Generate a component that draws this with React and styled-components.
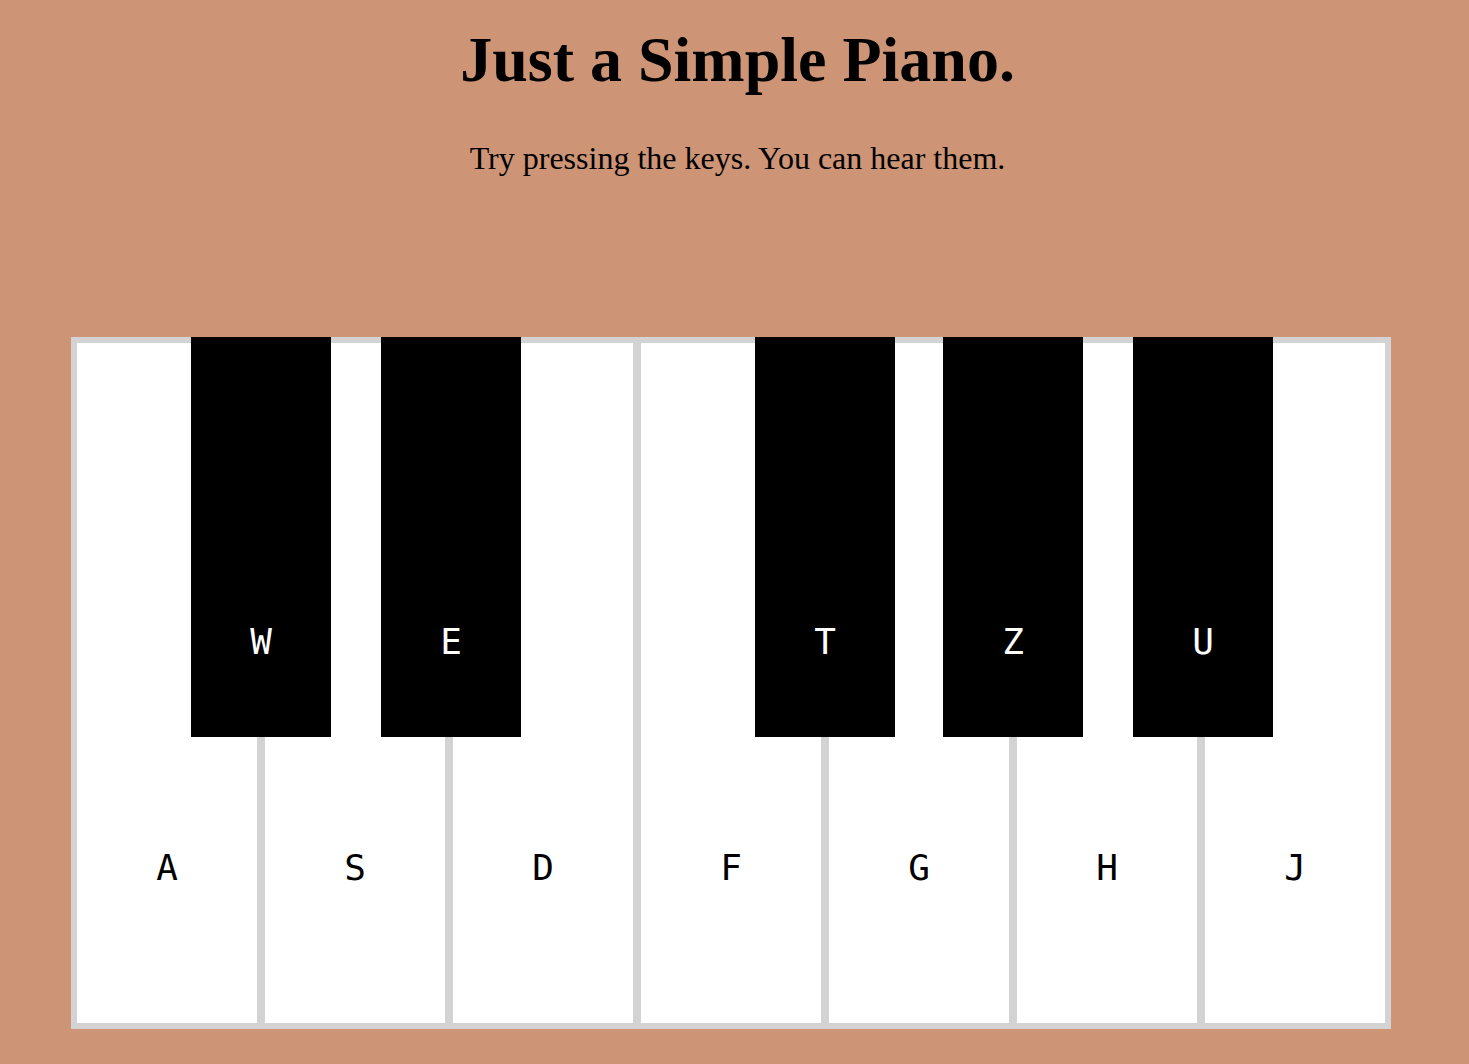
import React from "react";
import styled, { createGlobalStyle } from "styled-components";

const GlobalStyle = createGlobalStyle`
  html, body {
    margin: 0;
    padding: 0;
    background: #ce9476;
  }
  body {
    font-family: "Liberation Serif", "Times New Roman", serif;
    color: #000;
  }
`;

const Page = styled.main`
  display: flex;
  flex-direction: column;
  align-items: stretch;
  min-height: 1064px;
`;

const Title = styled.h1`
  margin: 23px 0 0 0;
  font-family: "Liberation Serif", "Times New Roman", serif;
  font-weight: bold;
  font-size: 64px;
  line-height: normal;
  text-align: center;
  padding-left: 6px;
`;

const Subtitle = styled.p`
  margin: 43px 0 0 0;
  font-size: 32px;
  line-height: normal;
  text-align: center;
  padding-left: 6px;
`;

const Piano = styled.div`
  position: relative;
  display: flex;
  width: 1316px;
  margin: 160px 0 0 71px;
  border: 2px solid #d3d3d3;
  background: #d3d3d3;
`;

const WhiteKey = styled.div`
  box-sizing: content-box;
  width: 180px;
  height: 680px;
  border: 4px solid #d3d3d3;
  background: #ffffff;
  display: flex;
  flex-direction: column;
  justify-content: flex-end;
  align-items: center;
`;

const KeyLabel = styled.span`
  font-family: "DejaVu Sans Mono", "Liberation Mono", monospace;
  font-size: 36px;
  line-height: 42px;
  color: ${(p) => (p.$dark ? "#ffffff" : "#000000")};
  margin-bottom: ${(p) => p.$offset}px;
`;

const BlackKey = styled.div`
  position: absolute;
  top: -2px;
  left: ${(p) => p.$left}px;
  width: 140px;
  height: 400px;
  background: #000000;
  display: flex;
  flex-direction: column;
  justify-content: flex-end;
  align-items: center;
`;

const whiteKeys = ["A", "S", "D", "F", "G", "H", "J"];
const blackKeys = [
  { label: "W", left: 118 },
  { label: "E", left: 308 },
  { label: "T", left: 682 },
  { label: "Z", left: 870 },
  { label: "U", left: 1060 },
];

export default function App() {
  return (
    <>
      <GlobalStyle />
      <Page>
        <Title>Just a Simple Piano.</Title>
        <Subtitle>Try pressing the keys. You can hear them.</Subtitle>
        <Piano>
          {whiteKeys.map((k) => (
            <WhiteKey key={k}>
              <KeyLabel $offset={134}>{k}</KeyLabel>
            </WhiteKey>
          ))}
          {blackKeys.map((k) => (
            <BlackKey key={k.label} $left={k.left}>
              <KeyLabel $dark $offset={74}>
                {k.label}
              </KeyLabel>
            </BlackKey>
          ))}
        </Piano>
      </Page>
    </>
  );
}
